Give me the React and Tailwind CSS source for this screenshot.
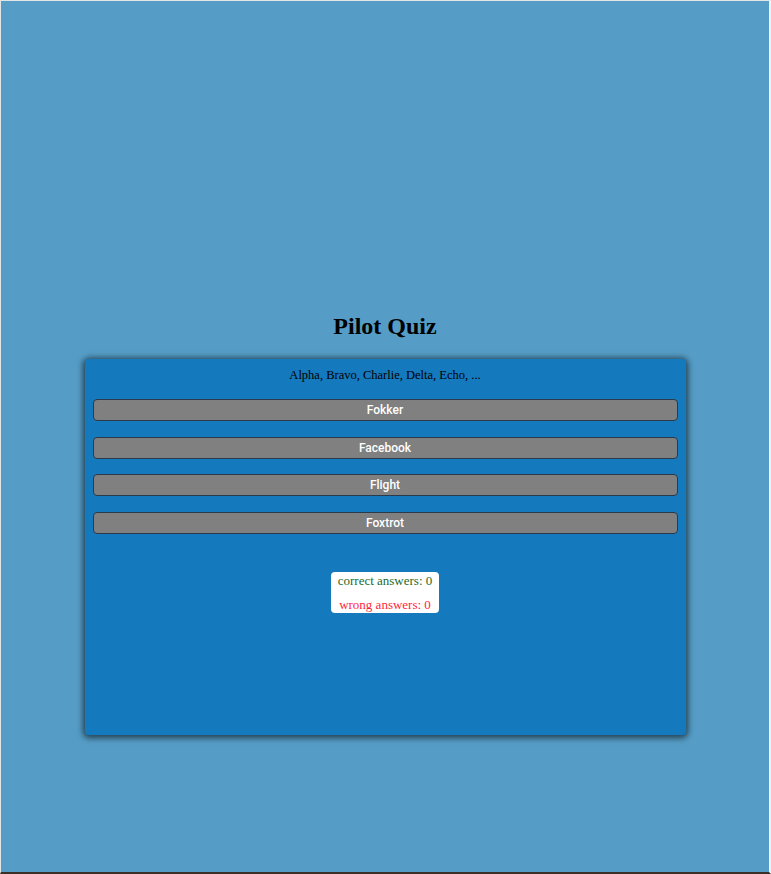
import React, { useState } from 'react';

const options = ['Fokker', 'Facebook', 'Flight', 'Foxtrot'];

const App = () => {
  const [correct, setCorrect] = useState(0);
  const [wrong, setWrong] = useState(0);

  const answer = (opt) => {
    if (opt === 'Foxtrot') setCorrect(correct + 1);
    else setWrong(wrong + 1);
  };

  return (
    <div className="min-h-[874px] w-full bg-[#559dc7] border-l border-t border-[#e4e4e4] border-r-2 border-r-[#eef3f6] border-b-2 border-b-[#3b2f27] flex flex-col items-center pt-[309px]">
      <h1 className="text-[24px] leading-[32px] font-bold text-black font-['Liberation_Serif',serif]">
        Pilot Quiz
      </h1>

      {/* Quiz card */}
      <div className="mt-[17px] w-[601px] h-[376px] bg-[#1479bd] rounded-[4px] shadow-[0_1px_6px_2px_rgba(0,0,0,0.6)] px-[8px] pt-[8px] flex flex-col items-center">
        <p className="text-[12.5px] leading-[16px] text-black font-['Liberation_Serif',serif]">
          Alpha, Bravo, Charlie, Delta, Echo, ...
        </p>

        <div className="w-full flex flex-col gap-[15.5px] mt-[16px]">
          {options.map((opt) => (
            <button
              key={opt}
              onClick={() => answer(opt)}
              className="w-full h-[22px] bg-[#808080] border border-[#2a3a4a] rounded-[4px] text-white text-[12px] font-medium font-['Roboto',Arial,sans-serif]"
            >
              {opt}
            </button>
          ))}
        </div>

        {/* Score box */}
        <div className="mt-[38px] w-[108px] h-[41px] bg-white rounded-[4px] flex flex-col items-center pt-[1px] font-['Liberation_Serif',serif] text-[13px] leading-[15px]">
          <span className="text-[#1d6b2c]">correct answers: {correct}</span>
          <span className="text-[#ff1f3d] mt-[9px]">wrong answers: {wrong}</span>
        </div>
      </div>
    </div>
  );
};

export default App;
